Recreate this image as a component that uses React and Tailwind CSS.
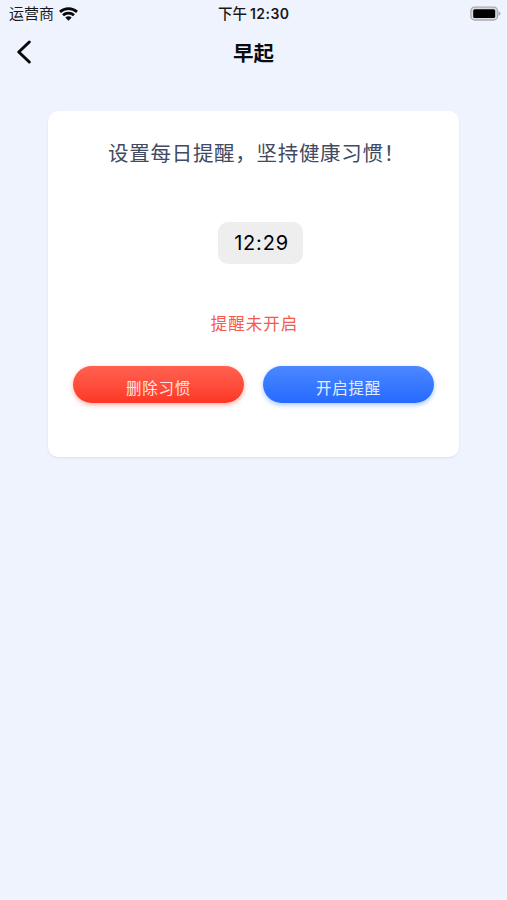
function StatusBar() {
  return (
    <div className="relative flex h-7 items-center justify-between pl-[9px] pr-[6px] text-[#18191d]">
      <div className="flex items-center gap-[5px]">
        <span className="text-[15px] leading-7">运营商</span>
        <svg className="mb-[1px] h-[14px] w-[19px]" viewBox="0 0 19 14" fill="none" stroke="#08090b" strokeWidth="2.8">
          <path d="M1 4.9C5.8.6 13.2.6 18 4.9" />
          <path d="M4 8.2C7 5.4 12 5.4 15 8.2" />
          <path d="M6.3 10.6C8.2 8.9 10.8 8.9 12.7 10.6L9.5 13.7Z" fill="#08090b" stroke="none" />
        </svg>
      </div>
      <div className="absolute left-[218px] top-0 flex gap-[3px] text-[14.5px] font-medium leading-7">
        <span>下午</span>
        <span className="font-['Inter'] text-[14px] font-semibold tracking-[0.45px]">12:30</span>
      </div>
      <svg className="mb-[2px] h-[15px] w-[31px]" viewBox="0 0 31 15">
        <rect x="0.9" y="1.2" width="26.6" height="12.8" rx="3.8" fill="#d9dbe0" stroke="#a9acb2" strokeWidth="1.3" />
        <rect x="3.2" y="3.2" width="22" height="8.8" rx="1.6" fill="#000" />
        <path d="M28.5 5.2C31.2 6.3 31.2 8.9 28.5 10Z" fill="#a9acb2" />
      </svg>
    </div>
  );
}

function Header() {
  return (
    <header className="grid h-12 grid-cols-[1fr_auto_1fr] items-center">
      <button className="ml-[16px] w-4" aria-label="返回">
        <svg className="h-6 w-4" viewBox="0 0 16 24" fill="none" stroke="#08090b" strokeWidth="3" strokeLinecap="round" strokeLinejoin="round">
          <path d="M13.3 2L2.8 12L13.3 22" />
        </svg>
      </button>
      <h1 className="pt-[3px] text-[20.5px] font-bold leading-8 text-[#0b0c10]">早起</h1>
      <span />
    </header>
  );
}

export default function App() {
  return (
    <div className="h-[900px] w-full overflow-hidden bg-[#eff3fe] font-['Liberation_Sans','Noto_Sans_CJK_SC',sans-serif]">
      <StatusBar />
      <Header />
      <main className="ml-[48px] mt-[35px] flex h-[346px] w-[411px] flex-col items-center rounded-[10px] bg-white shadow-[0_1px_2px_rgba(80,90,120,0.12)]">
        <p className="ml-[6px] mt-[27px] whitespace-nowrap text-[20.5px] leading-8 tracking-[0.7px] text-[#414a61]">
          设置每日提醒，坚持健康习惯！
        </p>
        <div className="ml-[14px] mt-[52px] flex h-[42px] w-[85px] items-center justify-center rounded-[10px] bg-[#eeeeef] pl-[2px] font-['Inter'] text-[20px] tracking-[0.8px] text-black">
          12:29
        </div>
        <p className="ml-[2px] mt-[48px] text-[16.5px] leading-6 tracking-[1px] text-[#f55a4e]">提醒未开启</p>
        <div className="mt-[30px] flex gap-[19px]">
          <button className="h-[37px] w-[171px] rounded-full bg-gradient-to-b from-[#ff6150] to-[#fe3524] pt-[8px] text-[15.5px] leading-6 tracking-[0.8px] text-[#ffe4e1] shadow-[0_2px_5px_rgba(254,60,40,0.4)]">
            删除习惯
          </button>
          <button className="h-[37px] w-[171px] rounded-full bg-gradient-to-b from-[#4b87ff] to-[#256aff] pt-[8px] text-[15.5px] leading-6 tracking-[0.8px] text-[#e4edff] shadow-[0_2px_5px_rgba(40,110,255,0.4)]">
            开启提醒
          </button>
        </div>
      </main>
    </div>
  );
}
